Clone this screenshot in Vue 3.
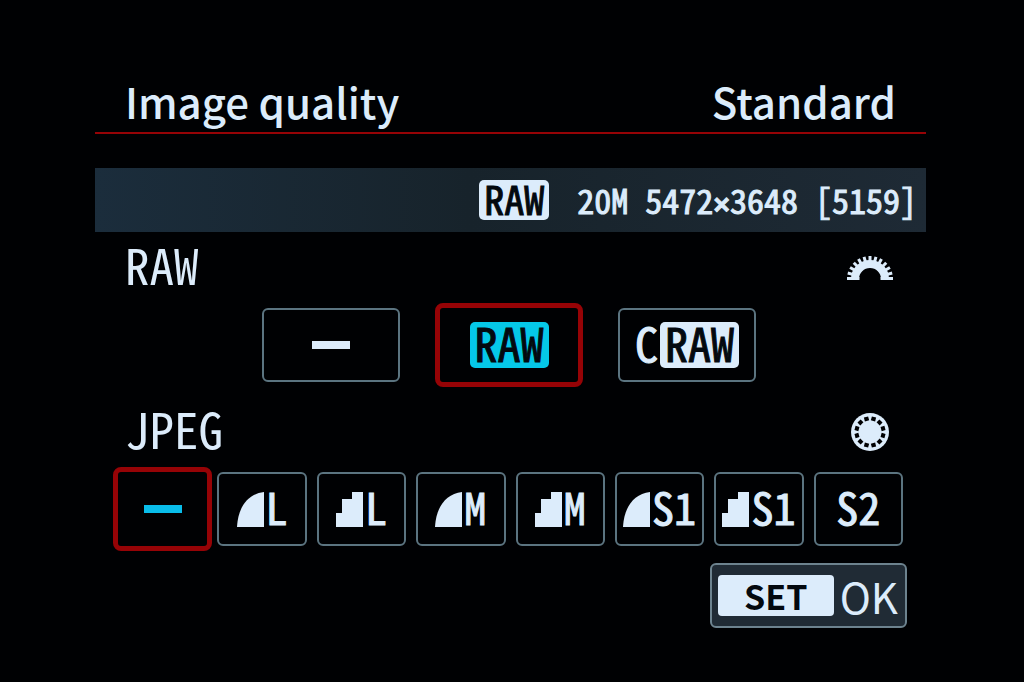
<script setup>
import { ref } from 'vue'

const rawChoice = ref('raw')
const jpegChoice = ref('none')

const rawOptions = [
  { id: 'none', name: 'No RAW' },
  { id: 'raw', name: 'RAW', badge: 'RAW' },
  { id: 'craw', name: 'Compact RAW', prefix: 'C', badge: 'RAW' },
]

const jpegOptions = [
  { id: 'none', name: 'No JPEG' },
  { id: 'lf', name: 'Large fine', shape: 'fine', size: 'L' },
  { id: 'ln', name: 'Large normal', shape: 'normal', size: 'L' },
  { id: 'mf', name: 'Medium fine', shape: 'fine', size: 'M' },
  { id: 'mn', name: 'Medium normal', shape: 'normal', size: 'M' },
  { id: 's1f', name: 'Small 1 fine', shape: 'fine', size: 'S1' },
  { id: 's1n', name: 'Small 1 normal', shape: 'normal', size: 'S1' },
  { id: 's2', name: 'Small 2', size: 'S2' },
]

const holes = Array.from({ length: 12 }, (_, i) => i * 30 + 15)
const teeth = Array.from({ length: 11 }, (_, i) => -75 + i * 15)
</script>

<template>
  <main class="screen">
    <header class="title-bar">
      <h1>Image quality</h1>
      <span class="mode">Standard</span>
    </header>

    <div class="summary">
      <span class="badge small">RAW</span>
      <span class="details">20M 5472<span class="times">×</span>3648 [5159]</span>
    </div>

    <section>
      <div class="section-head">
        <h2>RAW</h2>
        <svg class="dial" width="46" height="26" viewBox="-23 -24 46 26" aria-hidden="true">
          <path class="ring" d="M-15 0a15 15 0 0 1 30 0" />
          <rect v-for="a in teeth" :key="a" class="solid" x="-1.5" y="-23" width="3" height="6" :transform="`rotate(${a})`" />
          <path class="solid" d="M-23 -2h12.500v3h-12.500zM10.500 -2h12.500v3h-12.500z" />
        </svg>
      </div>
      <div class="options raw-options">
        <button
          v-for="o in rawOptions"
          :key="o.id"
          type="button"
          class="option"
          :class="{ selected: rawChoice === o.id }"
          :aria-pressed="rawChoice === o.id"
          :aria-label="o.name"
          @click="rawChoice = o.id"
        >
          <span v-if="!o.badge" class="dash"></span>
          <span v-if="o.prefix" class="prefix">{{ o.prefix }}</span>
          <span v-if="o.badge" class="badge">{{ o.badge }}</span>
        </button>
      </div>
    </section>

    <section>
      <div class="section-head">
        <h2>JPEG</h2>
        <svg class="dial" width="46" height="40" viewBox="-23 -20 46 40" aria-hidden="true">
          <circle class="solid" r="19" />
          <rect v-for="a in holes" :key="a" class="hole" x="-2.2" y="-15.5" width="4.4" height="4" :transform="`rotate(${a})`" />
        </svg>
      </div>
      <div class="options jpeg-options">
        <button
          v-for="o in jpegOptions"
          :key="o.id"
          type="button"
          class="option"
          :class="{ selected: jpegChoice === o.id }"
          :aria-pressed="jpegChoice === o.id"
          :aria-label="o.name"
          @click="jpegChoice = o.id"
        >
          <span v-if="!o.size" class="dash"></span>
          <svg v-if="o.shape" class="shape" width="27" height="35" viewBox="0 0 27 35" aria-hidden="true">
            <path v-if="o.shape === 'fine'" d="M0 35C1 16 10 2 27 0V35Z" />
            <path v-else d="M0 35V21H6V7H16V0H27V35Z" />
          </svg>
          <span v-if="o.size" class="size">{{ o.size }}</span>
        </button>
      </div>
    </section>

    <footer>
      <button type="button" class="confirm">
        <span class="key">SET</span>
        <span class="ok">OK</span>
      </button>
    </footer>
  </main>
</template>

<style>
body {
  margin: 0;
  background: #000103;
}
</style>

<style scoped>
.screen {
  --ink: #dcecfb;
  --line: #5b7480;
  --red: #960306;
  --mono: "Noto Sans Mono CJK JP", "Noto Sans CJK JP", sans-serif;
  box-sizing: border-box;
  min-height: 100vh;
  padding: 72px 98px 48px 95px;
  background: #000103;
  color: var(--ink);
  font-family: "Noto Sans CJK JP", "Noto Sans", sans-serif;
}

.title-bar {
  display: flex;
  justify-content: space-between;
  align-items: flex-start;
  height: 60px;
  padding: 0 30px;
  border-bottom: 2px solid var(--red);
  font-size: 42px;
  font-weight: 500;
  line-height: 58px;
}

h1,
h2 {
  margin: 0;
  font-size: inherit;
  font-weight: inherit;
}

.summary {
  display: flex;
  justify-content: flex-end;
  align-items: center;
  gap: 28px;
  height: 64px;
  margin-top: 34px;
  padding-right: 9px;
  background: linear-gradient(90deg, #1b2d3c, #17232b 45%, #1e2a35);
}

.details,
.badge,
.prefix,
.size {
  font-family: var(--mono);
  -webkit-text-stroke: 1px currentColor;
}

.details {
  font-size: 34px;
  line-height: 40px;
  white-space: nowrap;
}

.times {
  font-family: "Liberation Mono", monospace;
  font-size: 28px;
  line-height: 28px;
  font-weight: 700;
}

.badge {
  padding: 0 5px 6px;
  border-radius: 5px;
  background: var(--ink);
  color: #03090f;
  font-size: 46px;
  line-height: 40px;
}

.badge.small {
  padding-bottom: 4px;
  font-size: 40px;
  line-height: 36px;
}

.section-head {
  display: flex;
  justify-content: space-between;
  align-items: center;
  height: 72px;
  padding: 0 33px 0 30px;
  font-family: var(--mono);
  font-size: 49px;
}

h2 {
  padding-bottom: 8px;
  line-height: 64px;
}

.ring {
  fill: none;
  stroke: var(--ink);
  stroke-width: 8px;
}

.solid {
  fill: var(--ink);
}

.hole {
  fill: #000103;
}

.options {
  display: grid;
}

.raw-options {
  grid-template-columns: repeat(3, 1fr);
  gap: 40px;
  margin: 4px 170px 14px 167px;
}

.jpeg-options {
  grid-template-columns: repeat(8, 1fr);
  gap: 10px;
  margin: 4px 23px 0;
}

.option {
  box-sizing: border-box;
  display: flex;
  justify-content: center;
  align-items: center;
  gap: 2px;
  height: 74px;
  padding: 0;
  border: 2px solid var(--line);
  border-radius: 6px;
  background: transparent;
  color: var(--ink);
  cursor: pointer;
}

.option.selected {
  height: 84px;
  margin: -5px;
  border: 5px solid var(--red);
  border-radius: 8px;
}

.dash {
  width: 38px;
  height: 8px;
  background: currentColor;
}

.selected .dash {
  background: #09bdea;
}

.selected .badge {
  background: #05c8e8;
}

.prefix,
.size {
  padding-bottom: 6px;
  font-size: 46px;
  line-height: 40px;
}

.size {
  font-size: 44px;
}

.shape {
  fill: currentColor;
}

footer {
  display: flex;
  justify-content: flex-end;
  margin-top: 17px;
  padding-right: 19px;
}

.confirm {
  display: flex;
  align-items: center;
  gap: 6px;
  height: 65px;
  padding: 0 7px 0 6px;
  border: 2px solid #6d838f;
  border-radius: 6px;
  background: #202b35;
  color: var(--ink);
  font-family: inherit;
}

.key {
  width: 116px;
  border-radius: 4px;
  background: var(--ink);
  color: #03090f;
  font-size: 34px;
  font-weight: 700;
  line-height: 41px;
}

.ok {
  font-size: 42px;
  line-height: 41px;
}
</style>
